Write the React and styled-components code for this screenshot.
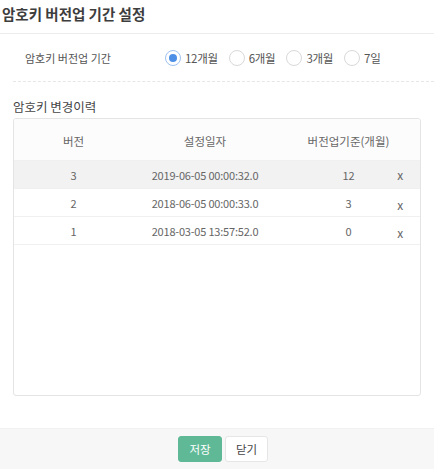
import React from "react";
import styled, { createGlobalStyle } from "styled-components";

const Global = createGlobalStyle`
  html, body { margin: 0; padding: 0; background: #fff; }
  body { font-family: "Noto Sans CJK KR", "Noto Sans", sans-serif; color: #555; }
  * { box-sizing: border-box; }
`;

const Page = styled.div`
  width: 434px;
  height: 469px;
  display: flex;
  flex-direction: column;
  background: #fff;
`;

const Title = styled.h1`
  margin: 0;
  height: 34px;
  padding: 2px 0 0 2px;
  font-size: 14.5px;
  font-weight: 700;
  line-height: 24px;
  color: #3d3d3d;
  border-bottom: 1px solid #ececec;
`;

const SettingRow = styled.div`
  display: flex;
  align-items: center;
  height: 48px;
  margin-left: 13px;
  padding-left: 12px;
  border-bottom: 1px dashed #e6e6e6;
`;

const Label = styled.span`
  width: 140px;
  font-size: 11px;
  color: #555;
`;

const RadioGroup = styled.div`
  display: flex;
  align-items: center;
  gap: 11px;
`;

const RadioItem = styled.label`
  display: flex;
  align-items: center;
  gap: 4px;
  font-size: 11.5px;
  color: #555;
  letter-spacing: -0.3px;
`;

const RadioCircle = styled.span`
  width: 16px;
  height: 16px;
  border-radius: 50%;
  border: 1px solid ${(p) => (p.$on ? "#9ec2f2" : "#d9d9d9")};
  background: #fff;
  display: flex;
  align-items: center;
  justify-content: center;
  &::after {
    content: "";
    width: 8px;
    height: 8px;
    border-radius: 50%;
    background: ${(p) => (p.$on ? "#4d8fe6" : "transparent")};
  }
`;

const Section = styled.div`
  padding: 0 13px;
  flex: 1;
  display: flex;
  flex-direction: column;
`;

const SectionTitle = styled.h2`
  margin: 0;
  padding-top: 14px;
  height: 36px;
  font-size: 12.5px;
  font-weight: 400;
  line-height: 22px;
  color: #444;
`;

const Table = styled.div`
  height: 278px;
  border: 1px solid #e4e4e4;
  border-radius: 3px;
  background: #fff;
  overflow: hidden;
`;

const Row = styled.div`
  display: grid;
  grid-template-columns: 119px 144px 1fr;
  height: ${(p) => (p.$head ? "42px" : "28px")};
  align-items: center;
  background: ${(p) => (p.$head ? "#fcfcfc" : p.$active ? "#f2f2f2" : "#fff")};
  border-bottom: 1px solid #f0f0f0;
  font-size: ${(p) => (p.$head ? "11.5px" : "11px")};
  letter-spacing: ${(p) => (p.$head ? "0" : "-0.2px")};
  color: #666;
`;

const Cell = styled.div`
  text-align: center;
  padding-top: ${(p) => (p.$head ? "2px" : "0")};
`;

const LastCell = styled.div`
  display: grid;
  grid-template-columns: 1fr auto 1fr;
  align-items: center;
`;

const Middle = styled.span`
  grid-column: 2;
`;

const Delete = styled.span`
  grid-column: 3;
  justify-self: end;
  margin-right: 17px;
  font-size: 12px;
  color: #666;
  padding-top: ${(p) => (p.$low ? "3px" : "0")};
`;

const Footer = styled.div`
  height: 41px;
  margin-top: 32px;
  background: #f7f7f7;
  border-top: 1px solid #f1f1f1;
  display: flex;
  justify-content: center;
  align-items: center;
  gap: 3px;
  padding-left: 12px;
`;

const Button = styled.button`
  height: 26px;
  width: ${(p) => (p.$primary ? "44px" : "43px")};
  border-radius: 3px;
  border: 1px solid ${(p) => (p.$primary ? "#5fb997" : "#e6e6e6")};
  background: ${(p) => (p.$primary ? "#5fb997" : "#fff")};
  color: ${(p) => (p.$primary ? "#fff" : "#444")};
  font-family: inherit;
  font-size: 11.5px;
  padding: 0;
`;

const options = [
  { label: "12개월", on: true },
  { label: "6개월" },
  { label: "3개월" },
  { label: "7일" },
];

const rows = [
  { v: "3", d: "2019-06-05 00:00:32.0", m: "12", active: true },
  { v: "2", d: "2018-06-05 00:00:33.0", m: "3" },
  { v: "1", d: "2018-03-05 13:57:52.0", m: "0" },
];

export default function App() {
  return (
    <Page>
      <Global />
      <Title>암호키 버전업 기간 설정</Title>
      <SettingRow>
        <Label>암호키 버전업 기간</Label>
        <RadioGroup>
          {options.map((o) => (
            <RadioItem key={o.label}>
              <RadioCircle $on={o.on} />
              {o.label}
            </RadioItem>
          ))}
        </RadioGroup>
      </SettingRow>
      <Section>
        <SectionTitle>암호키 변경이력</SectionTitle>
        <Table>
          <Row $head>
            <Cell $head>버전</Cell>
            <Cell $head>설정일자</Cell>
            <Cell $head>버전업기준(개월)</Cell>
          </Row>
          {rows.map((r) => (
            <Row key={r.v} $active={r.active}>
              <Cell>{r.v}</Cell>
              <Cell>{r.d}</Cell>
              <LastCell>
                <Middle>{r.m}</Middle>
                <Delete $low={!r.active}>x</Delete>
              </LastCell>
            </Row>
          ))}
        </Table>
      </Section>
      <Footer>
        <Button $primary>저장</Button>
        <Button>닫기</Button>
      </Footer>
    </Page>
  );
}
